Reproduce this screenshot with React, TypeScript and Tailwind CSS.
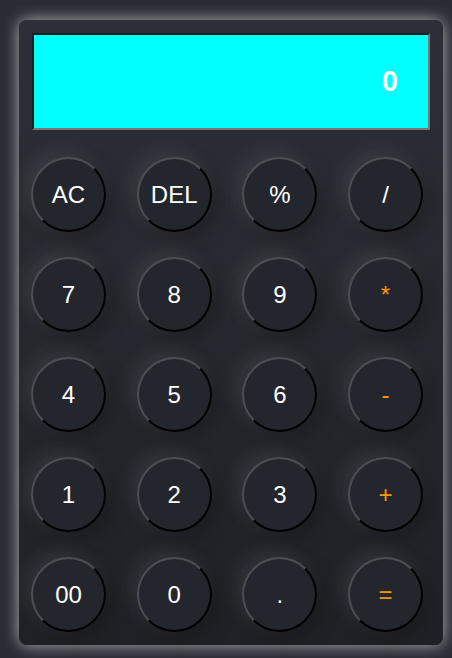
const keys = [
	{ label: "AC", op: false },
	{ label: "DEL", op: false },
	{ label: "%", op: false },
	{ label: "/", op: false },
	{ label: "7", op: false },
	{ label: "8", op: false },
	{ label: "9", op: false },
	{ label: "*", op: true },
	{ label: "4", op: false },
	{ label: "5", op: false },
	{ label: "6", op: false },
	{ label: "-", op: true },
	{ label: "1", op: false },
	{ label: "2", op: false },
	{ label: "3", op: false },
	{ label: "+", op: true },
	{ label: "00", op: false },
	{ label: "0", op: false },
	{ label: ".", op: false },
	{ label: "=", op: true },
];

function Key({ label, op }: { label: string; op: boolean }) {
	return (
		<button
			className={
				"w-[75px] h-[75px] shrink-0 rounded-full bg-[#23262c] border-2 border-t-[#4b4e53] border-l-[#4b4e53] border-b-black border-r-black text-[24px] shadow-[-6px_-6px_20px_rgba(255,255,255,0.09),6px_6px_20px_rgba(0,0,0,0.25)] " +
				(op ? "text-[#ff9500]" : "text-white")
			}
		>
			{label}
		</button>
	);
}

export default function App() {
	return (
		<div
			className="w-[452px] h-[658px] bg-[#292c34] pl-[19px] pt-[20px]"
			style={{ fontFamily: '"Liberation Sans", Arial, sans-serif' }}
		>
			<div className="w-[424px] h-[625px] rounded-[8px] bg-gradient-to-b from-[#2c2f37] to-[#1f2126] shadow-[0_0_16px_rgba(225,225,225,0.75)] p-[13px] flex flex-col">
				<div className="h-[98px] bg-[#00ffff] border-2 border-t-[#1c1c1c] border-l-[#1c1c1c] border-b-[#777] border-r-[#777] flex items-center justify-end pr-[30px]">
					<span className="text-white font-bold text-[29px]">0</span>
				</div>
				<div className="mt-[27px] -ml-px mr-[7px] grid grid-cols-[repeat(4,75px)] justify-between gap-y-[25px]">
					{keys.map((k) => (
						<Key key={k.label} label={k.label} op={k.op} />
					))}
				</div>
			</div>
		</div>
	);
}
